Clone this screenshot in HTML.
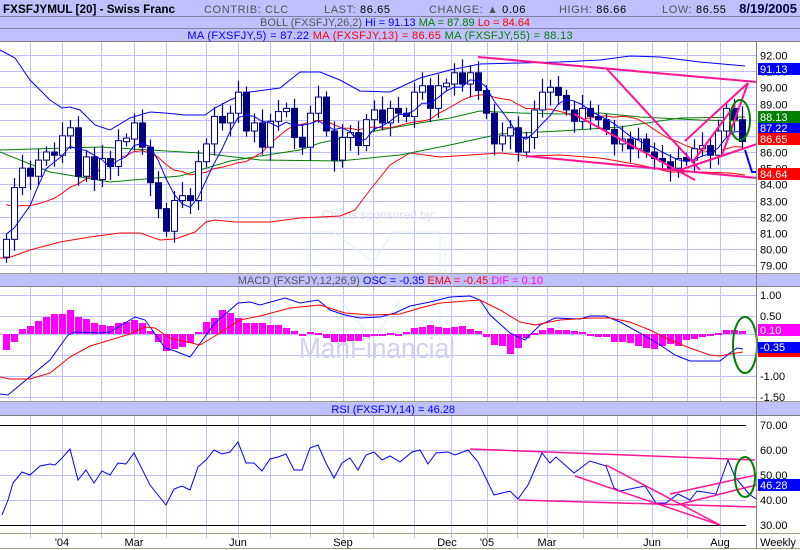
<!DOCTYPE html>
<html><head><meta charset="utf-8"><style>
body{margin:0;background:#fff;width:800px;height:550px;overflow:hidden;font-family:"Liberation Sans",sans-serif}
svg{display:block}
text{font-family:"Liberation Sans",sans-serif}
</style></head><body>
<svg id="s" width="800" height="550" viewBox="0 0 800 550" xmlns="http://www.w3.org/2000/svg">
<rect width="800" height="550" fill="#fff"/>
<g id="grid" stroke="#c0c0ff" stroke-width="1"></g>
<!-- watermark -->
<text x="322" y="219" font-size="12" fill="#dcdcf0">Charts sponsored by:</text>
<path d="M308,232 L308,273 M308,232 L333,232 L373,262 L393,232 L440,232 L440,273 M445,240 L445,273" stroke="#d8f4f8" fill="none"/>
<path d="M308,289 L308,345 M440,289 L440,345 M340,300 L373,340 L400,300" stroke="#d8f4f8" fill="none"/>
<text x="299" y="358" font-size="29" fill="#d0d0f4" textLength="156" lengthAdjust="spacingAndGlyphs">ManFinancial</text>
<g id="plots"></g>
<!-- header bars -->
<rect x="0" y="0" width="800" height="16" fill="#c0c0ff"/>
<line x1="0" y1="16.5" x2="800" y2="16.5" stroke="#8080a0"/>
<rect x="0" y="17" width="800" height="11" fill="#c0c0ff"/>
<line x1="0" y1="28.5" x2="800" y2="28.5" stroke="#8080a0"/>
<rect x="0" y="29" width="800" height="12" fill="#c0c0ff"/>
<line x1="0" y1="41.5" x2="800" y2="41.5" stroke="#808080"/>
<text x="3" y="13" font-size="12" font-weight="bold" fill="#000" textLength="172" lengthAdjust="spacingAndGlyphs">FXSFJYMUL [20] - Swiss Franc</text>
<text x="204" y="13" font-size="11" fill="#555" letter-spacing="0.6">CONTRIB: CLC</text>
<text x="324" y="13" font-size="11" fill="#555" letter-spacing="0.6">LAST: <tspan fill="#000">86.65</tspan></text>
<text x="429" y="13" font-size="11" fill="#555" letter-spacing="0.6">CHANGE: ▲ <tspan fill="#000">0.06</tspan></text>
<text x="559" y="13" font-size="11" fill="#555" letter-spacing="0.6">HIGH: <tspan fill="#000">86.66</tspan></text>
<text x="662" y="13" font-size="11" fill="#555" letter-spacing="0.6">LOW: <tspan fill="#000">86.55</tspan></text>
<text x="797" y="13" font-size="13" font-weight="bold" fill="#000040" text-anchor="end">8/19/2005</text>
<text x="530" y="26" font-size="11" text-anchor="end" fill="#555">BOLL (FXSFJY,26,2) <tspan fill="#0000ff">Hi = 91.13</tspan> <tspan fill="#008000">MA = 87.89</tspan> <tspan fill="#ff0000">Lo = 84.64</tspan></text>
<text x="573" y="39" font-size="11" text-anchor="end" fill="#0000ff" letter-spacing="0.33">MA (FXSFJY,5) = 87.22 <tspan fill="#ff0000">MA (FXSFJY,13) = 86.65</tspan> <tspan fill="#008000">MA (FXSFJY,55) = 88.13</tspan></text>
<!-- MACD bar -->
<line x1="0" y1="273.5" x2="800" y2="273.5" stroke="#a0a080"/>
<rect x="0" y="274" width="800" height="12" fill="#c0c0ff"/>
<line x1="0" y1="286.5" x2="800" y2="286.5" stroke="#808080"/>
<text x="543" y="284" font-size="11" text-anchor="end" fill="#555">MACD (FXSFJY,12,26,9) <tspan fill="#0000ff">OSC = -0.35</tspan> <tspan fill="#ff0000">EMA = -0.45</tspan> <tspan fill="#ff00ff">DIF = 0.10</tspan></text>
<!-- RSI bar -->
<line x1="0" y1="401.5" x2="800" y2="401.5" stroke="#a0a080"/>
<rect x="0" y="402" width="800" height="13" fill="#c0c0ff"/>
<line x1="0" y1="415.5" x2="800" y2="415.5" stroke="#808080"/>
<text x="455" y="413" font-size="11" text-anchor="end" fill="#0000ff">RSI (FXSFJY,14) = 46.28</text>
<line x1="0" y1="533.5" x2="800" y2="533.5" stroke="#a0a080"/>
<line x1="0" y1="548.5" x2="800" y2="548.5" stroke="#a0a080"/>
<line x1="756.5" y1="42" x2="756.5" y2="548" stroke="#808080"/>
<g font-size="11" fill="#000" text-anchor="middle">
<text x="62" y="546">'04</text><text x="134" y="546">Mar</text><text x="238" y="546">Jun</text>
<text x="343" y="546">Sep</text><text x="447" y="546">Dec</text><text x="487" y="546">'05</text>
<text x="547" y="546">Mar</text><text x="652" y="546">Jun</text><text x="720" y="546">Aug</text>
<text x="778" y="546">Weekly</text></g>
<g id="axis" font-size="11" fill="#000"></g>
</svg>
<script>
var NS="http://www.w3.org/2000/svg";
function el(p,t,a){var e=document.createElementNS(NS,t);for(var k in a)e.setAttribute(k,a[k]);p.appendChild(e);return e;}
var grid=document.getElementById('grid'),plots=document.getElementById('plots'),axis=document.getElementById('axis');
var vx=[30,62,101,134,166,206,238,270,310,343,373,414,451,487,517,547,583,617,652,687,720];
vx.forEach(function(x){el(grid,'line',{x1:x+.5,y1:42,x2:x+.5,y2:273});el(grid,'line',{x1:x+.5,y1:287,x2:x+.5,y2:401});el(grid,'line',{x1:x+.5,y1:416,x2:x+.5,y2:538});});
function py(p){return 55+(92-p)*16.17;}
for(var p=79;p<=92;p++){var y=Math.round(py(p))+.5;el(grid,'line',{x1:0,y1:y,x2:756,y2:y});var t=el(axis,'text',{x:760,y:y+4});t.textContent=p.toFixed(2);}
[295,316,334,355,376,397].forEach(function(y){el(grid,'line',{x1:0,y1:y+.5,x2:756,y2:y+.5});});
[['1.00',295],['0.50',316],['-1.00',376],['-1.50',397]].forEach(function(a){var t=el(axis,'text',{x:760,y:a[1]+4});t.textContent=a[0];});
[450,475,500].forEach(function(y){el(grid,'line',{x1:0,y1:y+.5,x2:746,y2:y+.5});});
[['70.00',425],['60.00',450],['50.00',475],['40.00',500],['30.00',525]].forEach(function(a){var t=el(axis,'text',{x:760,y:a[1]+4});t.textContent=a[0];});
el(plots,'line',{x1:0,y1:425.5,x2:746,y2:425.5,stroke:'#000'});
el(plots,'line',{x1:0,y1:525.5,x2:746,y2:525.5,stroke:'#000'});
function pl(pts,c,w){el(plots,'polyline',{points:pts,fill:'none',stroke:c,'stroke-width':w||1});}
pl("0,50 15,58 30,80 50,100 62,108 70,107 80,110 95,125 110,130 130,118 150,112 165,113 185,115 205,115 215,108 230,100 250,92 265,90 280,88 300,72 320,72 340,80 360,91 390,92 420,78 450,70 480,64 520,63 560,62 600,60 630,56 660,57 700,62 745,66","#0000ff");
pl("0,258 8,258 30,250 60,242 90,237 120,233 140,233 160,240 175,239 195,232 206,222 215,220 235,222 270,222 300,218 340,216 355,210 370,190 390,165 410,153 440,157 470,155 500,153 530,156 560,155 600,158 640,165 670,172 700,172 730,173 745,175","#ff0000");
pl("0,150 100,147 200,153 260,160 340,161 400,155 450,145 500,134 560,131 620,127 680,118 745,117","#008000");
pl("0,152 50,172 110,182 180,176 230,161 260,156 300,150 320,143 380,130 420,123 450,118 480,111 520,113 560,114 600,113 640,117 700,120 745,121","#008000");
var C=[80.6,83.8,85.0,84.5,85.5,86.0,85.8,87.0,87.5,84.5,85.7,84.3,85.6,85.1,86.7,86.8,87.8,86.3,84.1,82.5,81.1,83.0,83.3,83.0,85.4,86.5,88.2,87.8,88.4,89.7,87.3,87.8,86.3,87.9,88.5,88.7,86.9,86.3,88.4,89.4,87.3,85.5,86.9,87.2,86.4,88.0,88.6,87.8,88.7,88.4,88.2,89.7,90.1,88.7,90.1,90.2,90.9,90.2,90.9,89.8,88.4,86.5,87.0,87.5,86.0,86.9,88.6,89.7,90.0,89.5,88.6,87.9,88.7,88.2,88.0,87.4,86.5,86.8,86.2,86.8,86.0,85.6,85.4,85.0,85.6,85.5,86.2,86.4,85.8,87.3,88.7,88.0,86.65];
var pre=[85,85,84.5,84.5,84,84,83.5,83,82.5,82,81.5,81,79.5];
var all=pre.concat(C);
function ma(n){var s=[];for(var i=0;i<C.length;i++){var j=i+pre.length,t=0,c=0;for(var k=j;k>j-n&&k>=0;k--){t+=all[k];c++;}s.push((6+8*i)+","+py(t/c).toFixed(1));}return s.join(" ");}
pl(ma(13),"#ff0000");
var cg=el(plots,'g',{});
for(var i=0;i<C.length;i++){var x=6+8*i,o=all[i+pre.length-1],c=C[i];var hi=Math.max(o,c)+0.35+((i*7)%5)*0.12,lo=Math.min(o,c)-0.35-((i*3)%5)*0.12;
el(cg,'line',{x1:x+.5,y1:py(hi),x2:x+.5,y2:py(lo),stroke:'#000080','stroke-width':1.2});
var t=py(Math.max(o,c)),b=py(Math.min(o,c));if(b-t<2){t-=1;b+=1;}
el(cg,'rect',{x:x-2.5,y:t,width:6,height:b-t,fill:c<o?'#000080':'#fff',stroke:'#000080','stroke-width':1});}
pl(ma(5),"#0000ff");
var pk="#ff1493";
[[478,57,757,82],[607,69,700,170],[574,114,695,180],[526,156,757,178],[677,171,757,144],[685,141,748,83],[722,155,748,83],[692,163,735,105]].forEach(function(l){el(plots,'line',{x1:l[0],y1:l[1],x2:l[2],y2:l[3],stroke:pk,'stroke-width':2});});
el(plots,'ellipse',{cx:740,cy:120,rx:10,ry:20,fill:'none',stroke:'#008000','stroke-width':2});
pl("745,150 752,172 757,172","#0000ff",2);
var H=[350,342,329,326,321,317,314,314,310,317,319,323,325,326,323,322,320,323,331,342,351,349,347,343,332,322,318,310,313,318,323,323,323,325,325,328,331,334,332,333,338,342,342,341,341,337,335,335,333,334,332,328,327,325,327,328,327,326,329,331,337,345,346,354,348,338,333,330,328,330,330,331,332,335,337,337,342,342,343,346,348,349,346,344,346,340,339,337,336,333,330,330,331];
for(var i=0;i<H.length;i++){var x=6+8*i,v=H[i];var t=Math.min(v,334),h=Math.max(Math.abs(v-334),2);el(plots,'rect',{x:x-3,y:t,width:7,height:h,fill:'#ff00ff'});}
pl("0,394 8,395 20,385 50,360 68,335 75,332 100,333 110,332 135,317 145,320 165,348 175,351 190,357 215,323 238,303 250,302 260,305 285,298 300,303 318,300 330,310 345,315 360,318 380,317 395,313 410,306 430,302 450,297 470,296 480,300 490,315 510,333 525,340 540,325 555,318 580,319 590,316 605,316 620,322 640,333 660,345 675,355 690,361 720,361 730,353 737,348 743,349","#0000ff");
pl("0,377 10,379 30,379 50,373 70,357 90,346 110,340 130,334 145,327 155,328 170,338 200,345 215,336 240,320 260,316 290,308 320,305 345,313 370,315 400,314 420,308 440,303 480,300 500,310 520,322 535,325 560,320 590,318 610,318 630,322 650,330 670,340 690,348 710,355 720,356 730,354 743,352","#ff0000");
el(plots,'ellipse',{cx:745,cy:345,rx:12,ry:28,fill:'none',stroke:'#008000','stroke-width':2});
pl("2,515 8,500 13,483 22,472 30,475 40,466 50,464 55,465 62,458 70,449 78,480 86,470 94,483 102,471 110,475 118,463 126,464 134,453 150,485 166,505 174,489 182,486 190,490 198,467 206,460 214,450 222,454 230,452 238,442 246,463 254,463 262,471 270,459 278,457 286,454 294,470 302,470 310,448 318,445 326,463 334,478 342,463 350,458 358,470 366,455 374,452 382,460 390,456 400,462 412,452 420,450 428,464 436,453 448,452 455,455 468,450 478,462 494,495 510,491 518,499 528,485 542,453 550,463 556,457 574,473 590,461 606,466 614,488 620,491 645,486 656,503 666,503 678,494 690,500 697,491 716,494 728,460 735,477 749,494 756,499","#0000ff");
[[470,449,755,460],[519,500,756,507],[575,476,720,525],[606,465,720,525],[670,494,756,475],[677,505,756,485]].forEach(function(l){el(plots,'line',{x1:l[0],y1:l[1],x2:l[2],y2:l[3],stroke:pk,'stroke-width':1.5});});
el(plots,'ellipse',{cx:745,cy:477,rx:10,ry:20,fill:'none',stroke:'#008000','stroke-width':2});
function box(y,h,fill,txt){el(axis,'rect',{x:758,y:y,width:42,height:h,fill:fill});if(txt){var t=el(axis,'text',{x:760,y:y+h-2,fill:'#fff'});t.textContent=txt;}}
box(63,12,'#0000ff','91.13');box(122,12,'#0000ff','87.22');box(111,12,'#008000','88.13');
box(133,12,'#ff0000','86.65');box(168,12,'#ff0000','84.64');
box(353,4,'#ff0000','');box(324,12,'#ff00ff','0.10');box(342,11,'#0000ff','-0.35');
box(479,12,'#0000ff','46.28');
</script>
</body></html>
